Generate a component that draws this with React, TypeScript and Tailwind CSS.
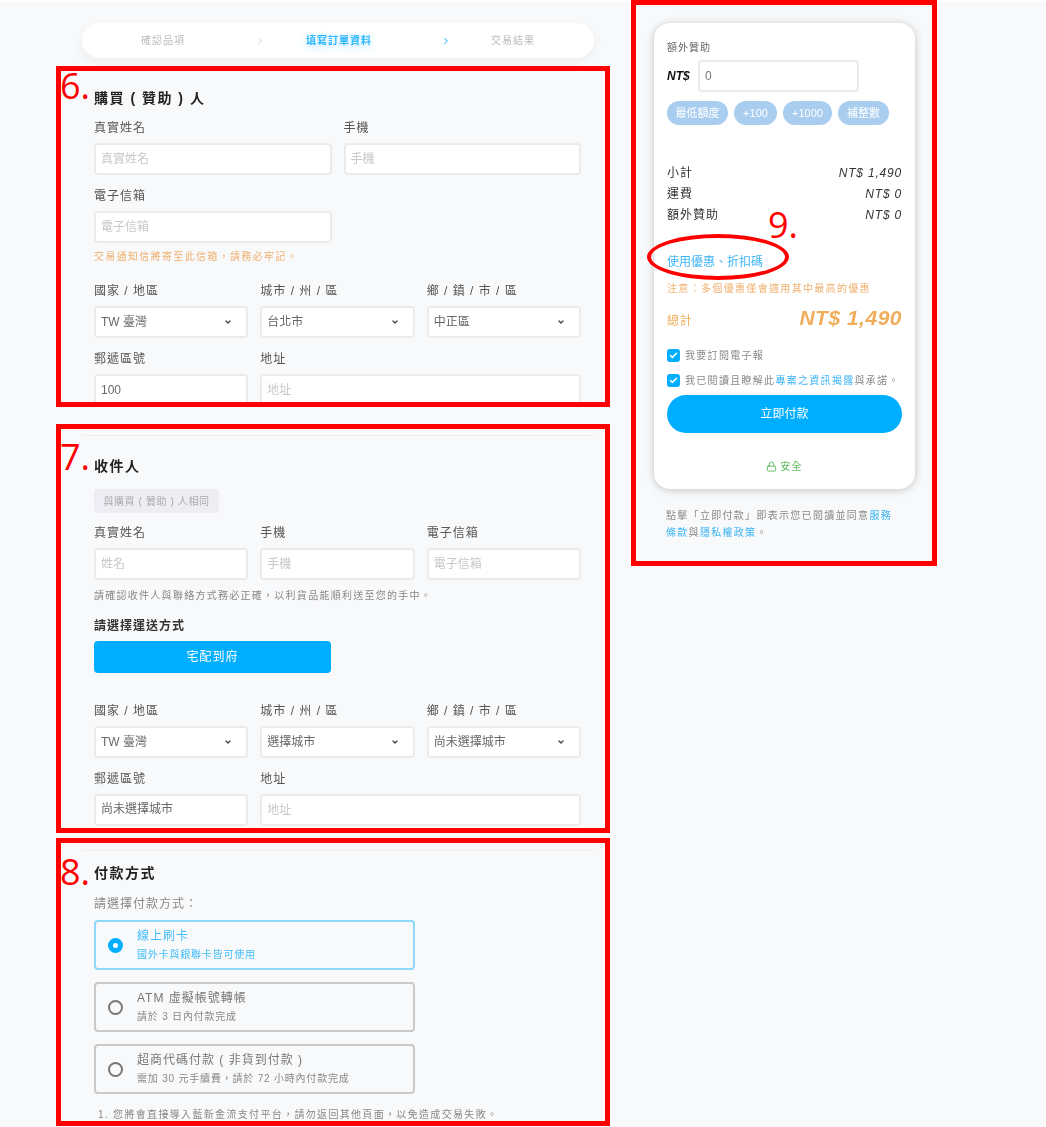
import { Check, ChevronDown, ChevronRight, Lock } from "lucide-react";

const fontStack = "font-['Liberation_Sans','Noto_Sans_CJK_TC',sans-serif]";

function Label({ children }: { children: React.ReactNode }) {
	return (
		<div className="mb-2 h-4 text-[12px] leading-[18px] tracking-[1px] text-[#555]">
			{children}
		</div>
	);
}

function TextField({
	label,
	placeholder,
	value,
	className,
	inputClassName,
}: {
	label: string;
	placeholder?: string;
	value?: string;
	className?: string;
	inputClassName?: string;
}) {
	return (
		<div className={className}>
			<Label>{label}</Label>
			<input
				type="text"
				readOnly
				value={value ?? ""}
				placeholder={placeholder}
				className={`h-8 w-full rounded-[4px] border-2 border-[#ebebeb] bg-white px-[5px] text-[12px] leading-4 text-[#666] placeholder:text-[#c8c8c8] focus:outline-none ${inputClassName ?? ""}`}
			/>
		</div>
	);
}

function SelectField({ label, value }: { label: string; value: string }) {
	return (
		<div>
			<Label>{label}</Label>
			<div className="flex h-8 items-center justify-between rounded-[4px] border-2 border-[#ebebeb] bg-white pr-[14px] pl-[5px] text-[12px] text-[#666]">
				<span>{value}</span>
				<ChevronDown className="size-2 text-[#444]" strokeWidth={4} />
			</div>
		</div>
	);
}

function AddressFields({
	city,
	district,
	zip,
	zipClassName,
}: {
	city: string;
	district: string;
	zip: string;
	zipClassName?: string;
}) {
	return (
		<>
			<div className="grid grid-cols-3 gap-x-3">
				<SelectField label="國家 / 地區" value="TW 臺灣" />
				<SelectField label="城市 / 州 / 區" value={city} />
				<SelectField label="鄉 / 鎮 / 市 / 區" value={district} />
			</div>
			<div className="mt-3 grid grid-cols-3 gap-x-3">
				<TextField label="郵遞區號" value={zip} inputClassName={zipClassName} />
				<TextField label="地址" placeholder="地址" className="col-span-2" />
			</div>
		</>
	);
}

function SectionTitle({ children }: { children: React.ReactNode }) {
	return (
		<h2 className="h-5 text-[14px] leading-5 font-bold tracking-[1.5px] text-[#222]">
			{children}
		</h2>
	);
}

function PaymentOption({
	title,
	desc,
	selected,
}: {
	title: string;
	desc: string;
	selected?: boolean;
}) {
	return (
		<div
			className={`flex h-[50px] items-center rounded-[4px] border-2 pl-3 ${
				selected ? "border-[#8fd8fb]" : "border-[#c9c9c9]"
			}`}
		>
			{selected ? (
				<span className="size-[15px] rounded-full border-[5px] border-[#00aeff] bg-white" />
			) : (
				<span className="size-[15px] rounded-full border-2 border-[#777]" />
			)}
			<div className="ml-[14px] -translate-y-px">
				<div
					className={`text-[12px] leading-[18px] tracking-[1px] ${
						selected ? "text-[#43bdf8]" : "text-[#777]"
					}`}
				>
					{title}
				</div>
				<div
					className={`mt-[3px] text-[10px] leading-[14px] tracking-[0.8px] ${
						selected ? "text-[#43bdf8]" : "text-[#888]"
					}`}
				>
					{desc}
				</div>
			</div>
		</div>
	);
}

function SummaryRow({ label, value }: { label: string; value: string }) {
	return (
		<div className="flex h-[21px] items-center justify-between pt-[2px] text-[12px] tracking-[0.8px] text-[#333]">
			<span className="tracking-[1px]">{label}</span>
			<span className="italic">{value}</span>
		</div>
	);
}

function CheckRow({ children }: { children: React.ReactNode }) {
	return (
		<div className="flex h-[14px] items-center gap-[5px] text-[10px] tracking-[1.3px] whitespace-nowrap text-[#888]">
			<span className="flex size-[13px] shrink-0 items-center justify-center rounded-[3px] bg-[#00aeff]">
				<Check className="size-[9px] text-white" strokeWidth={4} />
			</span>
			<span>{children}</span>
		</div>
	);
}

// red review marks drawn on top of the page
function Annotations() {
	const boxes = [
		"top-[66px] left-[56px] h-[341px] w-[554px]",
		"top-[424px] left-[56px] h-[409px] w-[554px]",
		"top-[838px] left-[56px] h-[288px] w-[554px]",
		"top-0 left-[631px] h-[566px] w-[306px]",
	];
	const numbers = [
		{ text: "6.", cls: "top-[62px] left-[60px]" },
		{ text: "7.", cls: "top-[433px] left-[60px]" },
		{ text: "8.", cls: "top-[848px] left-[60px]" },
		{ text: "9.", cls: "top-[201px] left-[768px]" },
	];
	return (
		<>
			{boxes.map((cls) => (
				<div key={cls} className={`absolute border-[5px] border-[#ff0000] ${cls}`} />
			))}
			{numbers.map((n) => (
				<div
					key={n.text}
					className={`absolute font-['Open_Sans',sans-serif] text-[36px] leading-[48px] text-[#ff0000] ${n.cls}`}
				>
					{n.text}
				</div>
			))}
			<div className="absolute top-[234px] left-[647px] h-[46px] w-[142px] rounded-[50%] border-[4px] border-[#ff0000]" />
		</>
	);
}

export default function App() {
	return (
		<div className={`h-[1127px] overflow-hidden bg-white pt-[2px] ${fontStack}`}>
			<div className="relative h-[1125px] bg-[#f8f9fb]">
				<div className="flex blur-[0.4px]">
					<div className="ml-[82px] w-[512px]">
						{/* steps */}
						<div className="mt-[21px] flex h-[35px] items-center rounded-full bg-white text-[10px] tracking-[1px] text-[#bbb] shadow-[0_4px_12px_rgba(0,0,0,0.05)]">
							<span className="ml-[59px]">確認品項</span>
							<ChevronRight className="ml-[70px] size-[10px]" strokeWidth={1.5} />
							<span className="ml-[41px] font-bold text-[#29b6ff] [text-shadow:0_2px_8px_#a8e0ff]">
								填寫訂單資料
							</span>
							<ChevronRight className="ml-[69px] size-[10px] text-[#29b6ff]" strokeWidth={2.5} />
							<span className="ml-10">交易結果</span>
						</div>

						{/* buyer */}
						<div className="mt-[30px] ml-3 w-[487px]">
							<SectionTitle>購買 ( 贊助 ) 人</SectionTitle>
							<div className="mt-[11px] grid grid-cols-2 gap-x-3 gap-y-3">
								<TextField label="真實姓名" placeholder="真實姓名" />
								<TextField label="手機" placeholder="手機" />
								<TextField label="電子信箱" placeholder="電子信箱" />
							</div>
							<p className="mt-[5px] h-4 text-[10px] leading-[18px] tracking-[1.33px] text-[#f0b070]">
								交易通知信將寄至此信箱，請務必牢記。
							</p>
							<div className="mt-[18px]">
								<AddressFields city="台北市" district="中正區" zip="100" />
							</div>
						</div>

						{/* receiver */}
						<div className="mt-[29px] h-px bg-[#eeeeee]" />
						<div className="mt-5 ml-3 w-[487px]">
							<SectionTitle>收件人</SectionTitle>
							<div className="mt-[13px] flex h-6 w-[125px] items-center justify-center rounded-[4px] bg-[#eeedf3] text-[10px] tracking-[0.6px] text-[#aaa]">
								與購買 ( 贊助 ) 人相同
							</div>
							<div className="mt-[11px] grid grid-cols-3 gap-x-3">
								<TextField label="真實姓名" placeholder="姓名" />
								<TextField label="手機" placeholder="手機" />
								<TextField label="電子信箱" placeholder="電子信箱" />
							</div>
							<p className="mt-[7px] h-4 text-[10px] leading-[18px] tracking-[1.27px] text-[#888]">
								請確認收件人與聯絡方式務必正確，以利貨品能順利送至您的手中。
							</p>
							<div className="mt-[14px] h-4 text-[12px] leading-[18px] font-bold tracking-[1px] text-[#333]">
								請選擇運送方式
							</div>
							<button
								type="button"
								className="mt-2 h-8 w-[237px] rounded-[4px] bg-[#00aeff] text-[12px] tracking-[1px] text-white"
							>
								宅配到府
							</button>
							<div className="mt-[29px]">
								<AddressFields
									city="選擇城市"
									district="尚未選擇城市"
									zip="尚未選擇城市"
									zipClassName="pb-[5px]"
								/>
							</div>
						</div>

						{/* payment */}
						<div className="mt-6 h-px bg-[#eeeeee]" />
						<div className="mt-3 ml-3 w-[487px]">
							<SectionTitle>付款方式</SectionTitle>
							<div className="mt-3 h-4 text-[12px] leading-[18px] tracking-[1px] text-[#888]">
								請選擇付款方式：
							</div>
							<div className="mt-[9px] flex w-[321px] flex-col gap-3">
								<PaymentOption selected title="線上刷卡" desc="國外卡與銀聯卡皆可使用" />
								<PaymentOption title="ATM 虛擬帳號轉帳" desc="請於 3 日內付款完成" />
								<PaymentOption
									title="超商代碼付款 ( 非貨到付款 )"
									desc="需加 30 元手續費，請於 72 小時內付款完成"
								/>
							</div>
							<p className="mt-[13px] ml-1 text-[10px] leading-4 tracking-[1.33px] whitespace-nowrap text-[#888]">
								1. 您將會直接導入藍新金流支付平台，請勿返回其他頁面，以免造成交易失敗。
							</p>
						</div>
					</div>

					{/* summary */}
					<div className="mt-[21px] ml-[60px] w-[261px]">
						<div className="h-[466px] rounded-2xl bg-white px-[13px] pt-4 shadow-[0_1px_8px_rgba(0,0,0,0.22)]">
							<div className="h-4 text-[10px] leading-[18px] tracking-[1px] text-[#666]">額外贊助</div>
							<div className="mt-[5px] flex items-center gap-2">
								<span className="w-[23px] text-[12px] font-bold italic text-[#111]">NT$</span>
								<input
									type="text"
									readOnly
									value="0"
									className="h-8 w-[161px] rounded-[4px] border-2 border-[#ebebeb] bg-white px-[5px] text-[12px] text-[#777] focus:outline-none"
								/>
							</div>
							<div className="mt-[9px] flex gap-[6px] text-[11px] text-white">
								<span className="flex h-[24px] w-[61px] items-center justify-center rounded-full bg-[#a9cdee]">最低額度</span>
								<span className="flex h-[24px] w-[43px] items-center justify-center rounded-full bg-[#a9cdee]">+100</span>
								<span className="flex h-[24px] w-[49px] items-center justify-center rounded-full bg-[#a9cdee]">+1000</span>
								<span className="flex h-[24px] w-[51px] items-center justify-center rounded-full bg-[#a9cdee]">補整數</span>
							</div>
							<div className="mt-9">
								<SummaryRow label="小計" value="NT$ 1,490" />
								<SummaryRow label="運費" value="NT$ 0" />
								<SummaryRow label="額外贊助" value="NT$ 0" />
							</div>
							<div className="mt-[29px] h-[18px] text-[12px] leading-[18px] text-[#3bb4f5]">
								使用優惠、折扣碼
							</div>
							<p className="mt-[10px] text-[10px] leading-4 tracking-[1.33px] text-[#f0b070]">
								注意：多個優惠僅會適用其中最高的優惠
							</p>
							<div className="mt-[5px] flex h-8 items-center justify-between text-[#f0ad5c]">
								<span className="mt-[6px] text-[12px] tracking-[1px]">總計</span>
								<span className="text-[21px] font-bold italic tracking-[0.5px]">NT$ 1,490</span>
							</div>
							<div className="mt-[14px] flex flex-col gap-[11px]">
								<CheckRow>我要訂閱電子報</CheckRow>
								<CheckRow>
									我已閱讀且瞭解此<span className="text-[#3bb4f5]">專案之資訊揭露</span>與承諾。
								</CheckRow>
							</div>
							<button
								type="button"
								className="mt-2 h-[38px] w-full rounded-full bg-[#00aeff] text-[12px] text-white"
							>
								立即付款
							</button>
							<div className="mt-[26px] flex items-center justify-center gap-[3px] text-[10px] tracking-[1.3px] text-[#5cb85c]">
								<Lock className="size-[11px]" strokeWidth={2} />
								<span>安全</span>
							</div>
						</div>
						<p className="mt-[18px] px-3 text-[10px] leading-[17px] tracking-[1.3px] text-[#888]">
							點擊「立即付款」即表示您已閱讀並同意<span className="text-[#3bb4f5]">服務</span>
							<br />
							<span className="text-[#3bb4f5]">條款</span>與<span className="text-[#3bb4f5]">隱私權政策</span>。
						</p>
					</div>
				</div>
				<div className="absolute -top-[2px] left-0">
					<Annotations />
				</div>
			</div>
		</div>
	);
}
